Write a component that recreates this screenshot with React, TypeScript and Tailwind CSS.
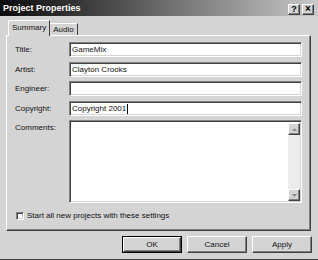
import React from "react";

const sunken =
  "border border-t-[#808080] border-l-[#808080] border-b-white border-r-white shadow-[inset_1px_1px_0_#404040,inset_-1px_-1px_0_#d4d4d4]";
const raised =
  "border border-t-white border-l-white border-b-[#404040] border-r-[#404040] shadow-[inset_-1px_-1px_0_#808080]";

function Field({ label, value, cursor }: { label: string; value: string; cursor?: boolean }) {
  return (
    <div className="flex items-center h-[15px]">
      <div className="w-[54px] shrink-0 leading-none">{label}</div>
      <div className={`flex-1 h-full bg-white flex items-center pl-[2px] ${sunken}`}>
        <span className="leading-none whitespace-pre">{value}</span>
        {cursor && <span className="w-[1px] h-[10px] bg-black ml-[1px]" />}
      </div>
    </div>
  );
}

function Arrow({ up }: { up?: boolean }) {
  return (
    <div className={`h-[12px] w-full bg-[#d4d4d4] flex items-center justify-center ${raised}`}>
      <svg width="5" height="3" viewBox="0 0 5 3">
        {up ? <polygon points="2.5,0 5,3 0,3" fill="#8a8a8a" /> : <polygon points="0,0 5,0 2.5,3" fill="#8a8a8a" />}
      </svg>
    </div>
  );
}

function Btn({ label, def }: { label: string; def?: boolean }) {
  return (
    <div className={`w-[60px] h-[17px] ${def ? "border border-black" : ""}`}>
      <div className={`w-full h-full flex items-center justify-center leading-none ${raised}`}>{label}</div>
    </div>
  );
}

export default function App() {
  return (
    <div className="w-[318px] h-[260px] bg-[#d4d4d4] flex flex-col font-['Liberation_Sans',Arial,sans-serif] text-[8px] text-[#111] border-b border-[#404040] overflow-hidden">
      <div className="h-[16px] shrink-0 flex items-center pl-[3px] pr-[4px] bg-gradient-to-r from-[#0c0c0c] via-[#6a6a6a] to-[#cacaca]">
        <span className="font-bold text-[9px] text-white leading-none">Project Properties</span>
        <div className="ml-auto flex gap-[2px] mt-[2px]">
          <div className={`w-[12px] h-[11px] bg-[#d4d4d4] flex items-center justify-center font-bold text-[9px] leading-none text-black ${raised}`}>?</div>
          <div className={`w-[12px] h-[11px] bg-[#d4d4d4] flex items-center justify-center font-bold text-[10px] leading-none text-black ${raised}`}>×</div>
        </div>
      </div>

      <div className="mt-[4px] h-[15px] pl-[8px] flex items-end shrink-0">
        <div className="relative z-10 h-[16px] -mb-[1px] px-[3px] flex items-start pt-[3px] bg-[#d4d4d4] border-t border-l border-t-white border-l-white border-r border-r-[#404040] rounded-tl-[2px]">
          <span className="leading-none">Summary</span>
        </div>
        <div className="h-[12px] px-[3px] flex items-start pt-[2px] border-t border-t-white border-r border-r-[#404040]">
          <span className="leading-none">Audio</span>
        </div>
      </div>

      <div className="ml-[6px] w-[305px] h-[196px] shrink-0 flex flex-col pl-[8px] pr-[8px] pt-[6px] border border-t-white border-l-white border-b-[#404040] border-r-[#404040] shadow-[inset_-1px_-1px_0_#808080]">
        <Field label="Title:" value="GameMix" />
        <div className="mt-[5px]"><Field label="Artist:" value="Clayton Crooks" /></div>
        <div className="mt-[4px]"><Field label="Engineer:" value="" /></div>
        <div className="mt-[5px]"><Field label="Copyright:" value="Copyright 2001" cursor /></div>
        <div className="mt-[4px] flex h-[83px]">
          <div className="w-[54px] shrink-0 leading-none pt-[4px]">Comments:</div>
          <div className={`flex-1 h-full bg-white flex justify-end p-[2px] pr-[1px] pb-[1px] ${sunken}`}>
            <div className="w-[12px] h-full flex flex-col bg-[#ececec]">
              <Arrow up />
              <div className="flex-1" />
              <Arrow />
            </div>
          </div>
        </div>
        <div className="mt-[9px] flex items-center h-[8px] pl-[1px]">
          <div className={`w-[8px] h-[8px] bg-white ${sunken}`} />
          <span className="ml-[3px] leading-none">Start all new projects with these settings</span>
        </div>
      </div>

      <div className="mt-[5px] flex justify-end gap-[5px] pr-[6px]">
        <Btn label="OK" def />
        <Btn label="Cancel" />
        <Btn label="Apply" />
      </div>
    </div>
  );
}
